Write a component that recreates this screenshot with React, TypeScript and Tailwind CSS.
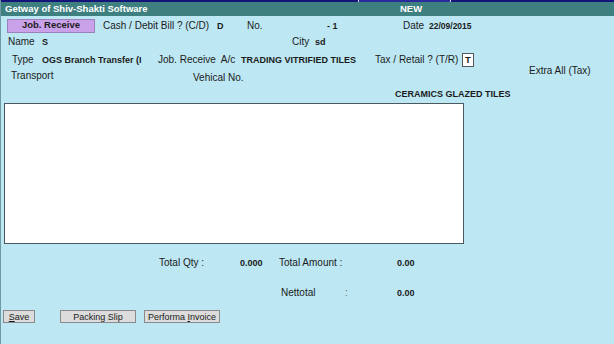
export default function App() {
  const lbl = 'text-[10px] text-[#1b1b1b] leading-[14px] whitespace-nowrap'
  const val = 'text-[9px] font-bold text-[#1b1b1b] leading-[14px] whitespace-nowrap'
  const btn = 'h-[13px] bg-[#dcdcdc] border border-[#8a8a8a] text-[9px] leading-[10px] text-[#1b1b1b] flex items-center justify-center shrink-0'

  return (
    <div className="w-[614px] h-[344px] bg-[#bde7f3] overflow-hidden border-l border-[#6f9aa4] font-['Liberation_Sans',Arial,sans-serif]">
      {/* top frame strip */}
      <div className="flex h-[2px]">
        <div className="w-[357px] bg-[#14147a]" />
        <div className="w-[93px] bg-[#2a2a9a] border-x border-[#d8d8ff]" />
        <div className="flex-1 bg-[#14147a]" />
      </div>

      {/* title bar */}
      <div className="flex items-center h-[14px] bg-[#3e8080] text-white text-[9.5px] font-bold">
        <span className="w-[399px] pl-[4px]">Getway of Shiv-Shakti Software</span>
        <span>NEW</span>
      </div>

      {/* row 1 */}
      <div className="flex items-center h-[17px] pl-[6px] pt-[2px]">
        <div className="w-[88px] h-[14px] bg-[#c9a2ea] border border-[#9c82bd] flex items-center justify-center text-[9.5px] font-bold text-[#1b1b1b] shrink-0">
          Job. Receive
        </div>
        <span className={`${lbl} w-[114px] ml-[8px]`}>Cash / Debit Bill ? (C/D)</span>
        <span className={`${val} w-[30px]`}>D</span>
        <span className={`${lbl} w-[80px]`}>No.</span>
        <span className={`${val} w-[76px]`}>- 1</span>
        <span className={`${lbl} w-[26px]`}>Date</span>
        <span className="text-[8.5px] font-bold text-[#1b1b1b] leading-[14px] whitespace-nowrap">22/09/2015</span>
      </div>

      {/* row 2 */}
      <div className="flex items-center h-[18px] pl-[7px]">
        <span className={`${lbl} w-[34px]`}>Name</span>
        <span className={`${val} w-[250px]`}>S</span>
        <span className={`${lbl} w-[23px]`}>City</span>
        <span className={val}>sd</span>
      </div>

      {/* row 3 */}
      <div className="flex items-center h-[18px] pl-[11px]">
        <span className={`${lbl} w-[30px]`}>Type</span>
        <span className={`${val} w-[116px]`}>OGS Branch Transfer (I</span>
        <span className={`${lbl} w-[83px]`}>Job. Receive&nbsp; A/c</span>
        <span className={`${val} w-[134px]`}>TRADING VITRIFIED TILES</span>
        <span className={`${lbl} w-[87px]`}>Tax / Retail ? (T/R)</span>
        <div className="w-[12px] h-[14px] bg-white border border-[#555] flex items-center justify-center text-[9.5px] font-bold text-[#1b1b1b]">
          T
        </div>
      </div>

      {/* row 4 */}
      <div className="flex items-start h-[17px] pl-[10px]">
        <span className={`${lbl} w-[182px]`}>Transport</span>
        <span className={`${lbl} w-[336px] mt-[2px]`}>Vehical No.</span>
        <span className={`${lbl} -mt-[5px]`}>Extra All (Tax)</span>
      </div>

      {/* row 5 */}
      <div className="flex items-center h-[16px] pl-[394px]">
        <span className={val}>CERAMICS GLAZED TILES</span>
      </div>

      {/* grid box */}
      <div className="ml-[3px] mt-[1px] w-[460px] h-[141px] bg-white border border-[#4b5a60]" />

      {/* totals */}
      <div className="flex items-center h-[18px] mt-[10px] pl-[158px]">
        <span className={`${lbl} w-[81px]`}>Total Qty :</span>
        <span className={`${val} w-[39px]`}>0.000</span>
        <span className={`${lbl} w-[118px]`}>Total Amount :</span>
        <span className={val}>0.00</span>
      </div>
      <div className="flex items-center h-[18px] mt-[12px] pl-[280px]">
        <span className={`${lbl} w-[64px]`}>Nettotal</span>
        <span className={`${lbl} w-[52px] text-[#777]`}>:</span>
        <span className={val}>0.00</span>
      </div>

      {/* buttons */}
      <div className="flex items-center mt-[8px] pl-[2px]">
        <button className={`${btn} w-[32px]`}>
          <span><u>S</u>ave</span>
        </button>
        <button className={`${btn} ml-[25px] w-[76px]`}>Packing Slip</button>
        <button className={`${btn} ml-[8px] w-[76px]`}>
          <span>Performa <u>I</u>nvoice</span>
        </button>
      </div>
    </div>
  )
}
